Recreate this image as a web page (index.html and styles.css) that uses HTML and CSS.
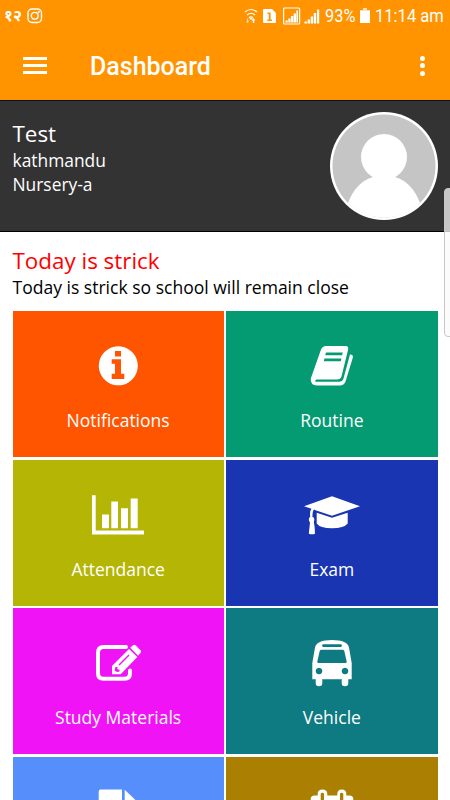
FILE: index.html
```html
<!DOCTYPE html>
<html>
	<head>
		<meta charset="utf-8">
		<title>Dashboard</title>
		<link rel="stylesheet" href="styles.css">
	</head>
	<body>
		<div class="wrap">
			<div class="status">
				<span class="date">१२</span>
				<svg class="insta" viewBox="0 0 16 16"><rect x="1" y="1" width="13.5" height="13.5" rx="4"/><circle cx="7.75" cy="7.75" r="3.4"/><circle cx="11.8" cy="3.8" r=".4"/></svg>
				<svg class="signals" viewBox="0 0 76 18">
					<g class="line"><path d="M1 5Q7 0 13 5M3 8Q7 4.5 11 8M5 10.7Q7 9 9 10.7"/></g>
					<path d="M5.7 11h2.600v1.500h-2.600zM9.500 11l2 2.500h-1.300V16H8.800v-2.500H7.500z"/>
					<path opacity=".6" d="M3 11.5h1.200V14h1.200l-1.800 2.200L1.800 14H3z"/>
					<path fill-rule="evenodd" d="M20 2h8l4 4v9q0 1-1 1H20q-1 0-1-1V3q0-1 1-1zM23.500 5.500v1.400h1.300v5.600h-1.500V14h4.700v-1.500h-1.400v-7z"/>
					<rect class="line" x="39.600" y="1" width="16" height="16" rx="1"/>
					<path d="M41.500 15.500v-2h2.300v2zM44.300 15.500v-4h2.300v4zM47 15.500V9h2.300v6.500zM49.700 15.500V6.500h2.300v9zM52.400 15.500V3.500h1.600v12z"/>
					<path d="M60.500 16.500v-2h2.400v2zM63.600 16.500v-4h2.400v4zM66.700 16.500v-7h2.400v7zM69.800 16.500V6h2.400v10.500zM73 16.500v-14h2.200v14z"/>
				</svg>
				<span class="percent">93%</span>
				<svg class="battery" viewBox="0 0 10 15"><path opacity=".7" d="M3 0h4v2H3zM0 2h10v2H0z"/><path d="M0 3h10v12H0z"/></svg>
				<span class="time">11:14 am</span>
			</div>
			<div class="bar">
				<div class="menu"><i></i><i></i><i></i></div>
				<h1>Dashboard</h1>
				<div class="more"><i></i><i></i><i></i></div>
			</div>
			<div class="user">
				<div class="info">
					<h2>Test</h2>
					<p>kathmandu</p>
					<p>Nursery-a</p>
				</div>
				<svg class="avatar" viewBox="0 0 108 108">
					<circle cx="54" cy="54" r="54" fill="#fff"/>
					<circle cx="54" cy="54" r="51.500" fill="#c5c5c5"/>
					<circle cx="54" cy="45" r="23" fill="#fff"/>
					<path fill="#fff" d="M18 91Q26 70 43 65H65Q82 70 90 91Q76 105.500 54 105.500T18 91z"/>
				</svg>
			</div>
			<div class="notice">
				<h3>Today is strick</h3>
				<p>Today is strick so school will remain close</p>
			</div>
			<ul class="goods">
				<li class="notifications">
					<svg viewBox="0 0 60 44"><path fill-rule="evenodd" d="M30.300 1.300a19.500 19.500 0 1 0 .01 0zM27 6h6v5.500h-6zM23.700 14.300H33v14.400h3.300V34H23.700v-5.300H27v-10h-3.300z"/></svg>
					<span>Notifications</span>
				</li>
				<li class="routine">
					<svg viewBox="0 0 60 44">
						<path fill-rule="evenodd" d="M24 1H43.500Q47 1 46 5L39.500 31.500Q38.500 34.500 35 34.500H14.500Q12.500 35 13.500 36.700H37Q40.500 36.700 41.500 33.500L48 9.500Q51.800 9.500 50.700 13L43.500 36.500Q42 40.500 38 40.500H15Q8 40 8.800 33.500L19 4.500Q20.500 1 24 1zM24 7.500l-.8 2.800H40l.8-2.800zM22.500 13.500l-.8 2.800h17l.8-2.800z"/>
					</svg>
					<span>Routine</span>
				</li>
				<li class="attendance">
					<svg viewBox="0 0 60 44"><path d="M4 1.200h3.700v35.300H56v4H4zM14 20.500h7v13.700h-7zM23.300 7.500H30v26.700h-6.700zM33 14.200h7v20h-7zM42.700 4.500h7v29.700h-7z"/></svg>
					<span>Attendance</span>
				</li>
				<li class="exam">
					<svg viewBox="0 0 60 44">
						<path d="M30 2.200L58 12.200L30 21.800L13.500 16.300Q12.500 15.700 12 15.500Q10.500 17 10.400 22.800Q12.500 23.500 12.300 26L11.800 28Q13 33 13 39.800Q10 40.800 6.800 39.800L8 28.500Q5.500 25 8.200 22.800Q7.500 17 9.500 14.800L2 12.200z"/>
						<path d="M14.700 18.800L30 23.800L45.700 18.800V29.500Q42 34.200 30 34.200T14.700 29.500z"/>
					</svg>
					<span>Exam</span>
				</li>
				<li class="study">
					<svg viewBox="0 0 60 44">
						<path class="frame" d="M38 5H15.500Q10 5 10 10.500V31.200Q10 36.700 15.500 36.700H36.500Q42 36.700 42 31.200V28.500"/>
						<path fill-rule="evenodd" d="M24 32.300V24L41 7L49.300 15L32.700 32.300zM27.500 25L26.500 28.500L29 30L31.500 29.500V27.500H29.500V25zM30.500 22.500l1 1L41.500 13.500l-1-1z"/>
						<path d="M42.200 5.800L45 3.200Q46.300 2.300 47.800 3.500L52.500 8.200Q53.500 9.700 52.500 11L50 13.800z"/>
					</svg>
					<span>Study Materials</span>
				</li>
				<li class="vehicle">
					<svg viewBox="0 0 60 44"><path fill-rule="evenodd" d="M10.300 37.300V21L13 5.500Q14.500-2 30-2T47 5.500L49.700 21V37.300H46.300V41a3.300 3.300 0 0 1-6.600 0V37.300H20.300V41a3.300 3.300 0 0 1-6.600 0V37.300zM21.500 2.300a1.300 1.300 0 0 0 0 2.700h17a1.300 1.300 0 0 0 0-2.700zM19.700 7.700Q18 7.700 17.700 9L15.300 19.500Q15.200 21 16.500 21H43.500Q44.800 21 44.700 19.500L42.300 9Q42 7.700 40.500 7.700zM17 25.700a3.300 3.300 0 1 0 .01 0zM43 25.700a3.300 3.300 0 1 0 .01 0z"/></svg>
					<span>Vehicle</span>
				</li>
				<li class="files">
					<svg viewBox="0 0 60 44"><path d="M12.700-1.500H34V12H48V44H10.700V.5Q10.700-1.500 12.700-1.500zM36.700-1.200L48 9.500H36.700z"/></svg>
				</li>
				<li class="calendar">
					<svg viewBox="0 0 60 44"><path fill-rule="evenodd" d="M8.700 44V8Q8.700 4.500 12.500 4.500H15.700V3Q15.700-1.500 20.500-1.500T25.300 3V4.500H35.300V3Q35.300-1.500 39.800-1.500T44.300 3V4.500H47.500Q51.300 4.500 51.300 8V44zM18.700 3V12H22V3Q22 1.800 20.400 1.800T18.700 3zM38 3V12H41.300V3Q41.300 1.800 39.700 1.800T38 3z"/></svg>
				</li>
			</ul>
			<div class="thumb"></div>
		</div>
	</body>
</html>
```
FILE: styles.css
```css
*{margin:0;padding:0;box-sizing:border-box;}
ul{list-style:none;}
body{background:#fff;font-family:"Open Sans","Noto Sans",sans-serif;}
svg{display:block;fill:#fff;overflow:visible;}
div.wrap{position:relative;width:450px;height:800px;overflow:hidden;}
div.status{display:flex;align-items:center;height:31px;padding-left:4px;background:#ff9300;color:#fff;font-family:Roboto,sans-serif;font-size:18px;line-height:31px;white-space:nowrap;}
div.status>span{flex:none;}
div.status>svg{flex:none;}
div.status>span.date{width:23px;font-family:"Noto Sans","Noto Sans Devanagari",sans-serif;font-size:16px;font-weight:bold;}
svg.insta{width:16px;height:16px;fill:none;stroke:#fff;stroke-width:1.4;}
svg.signals{width:76px;height:18px;margin-left:201px;}
svg.signals .line{fill:none;stroke:#fff;stroke-width:1.2;}
div.status>span.percent{width:33px;margin-left:5px;transform:scaleX(.91);transform-origin:left;}
svg.battery{width:10px;height:15px;margin-left:2px;}
div.status>span.time{margin-left:5px;transform:scaleX(.92);transform-origin:left;}
div.bar{display:flex;align-items:center;height:69px;padding:0 25px 0 23px;background:#ff9300;}
div.menu{width:24px;display:grid;gap:4.500px;}
div.menu>i{height:2.400px;background:#fff;}
div.bar>h1{flex:1;margin-left:43px;padding-top:1px;color:#fff;font:500 25px Roboto,sans-serif;}
div.more{display:grid;gap:2.500px;}
div.more>i{width:5px;height:5px;border-radius:50%;background:#fff;}
div.user{display:flex;justify-content:space-between;height:132px;padding:13px 12px 0 12.500px;background:#333;border-top:1px solid #0c0b22;border-bottom:1px solid #000;color:#fff;}
div.info{padding-top:5px;}
div.info>h2{font-size:22.400px;line-height:29px;font-weight:400;}
div.info>p{font-size:17.400px;line-height:24px;}
svg.avatar{width:108px;height:108px;margin-top:-2px;}
div.notice{height:79px;padding:14px 12.500px 0;}
div.notice>h3{color:#f00;font-size:22.400px;line-height:29px;font-weight:400;}
div.notice>p{font-size:17.550px;line-height:24px;color:#000;white-space:nowrap;}
ul.goods{display:grid;grid-template-columns:1fr 1fr;grid-auto-rows:146px;gap:2.500px;padding:0 12.500px;}
ul.goods>li{display:flex;flex-direction:column;align-items:center;padding-top:34px;color:#fff;}
ul.goods>li>svg{flex:none;width:60px;height:44px;}
ul.goods>li>span{margin-top:19px;font-size:17.500px;line-height:24px;}
ul.goods>li.notifications{background:#ff5500;}
ul.goods>li.routine{background:#059b72;}
ul.goods>li.attendance{background:#b4b505;}
ul.goods>li.exam{background:#1a35b2;}
ul.goods>li.study{background:#ef13f5;}
ul.goods>li.vehicle{background:#0e7a82;}
ul.goods>li.files{background:#568efb;}
ul.goods>li.calendar{background:#aa7f02;}
ul.goods .frame{fill:none;stroke:#fff;stroke-width:4;stroke-linecap:round;}
div.thumb{position:absolute;left:444px;top:188px;width:10px;height:149px;border:1px solid #c8c8c8;border-radius:4px;background:rgba(250,250,250,.75);}
```
